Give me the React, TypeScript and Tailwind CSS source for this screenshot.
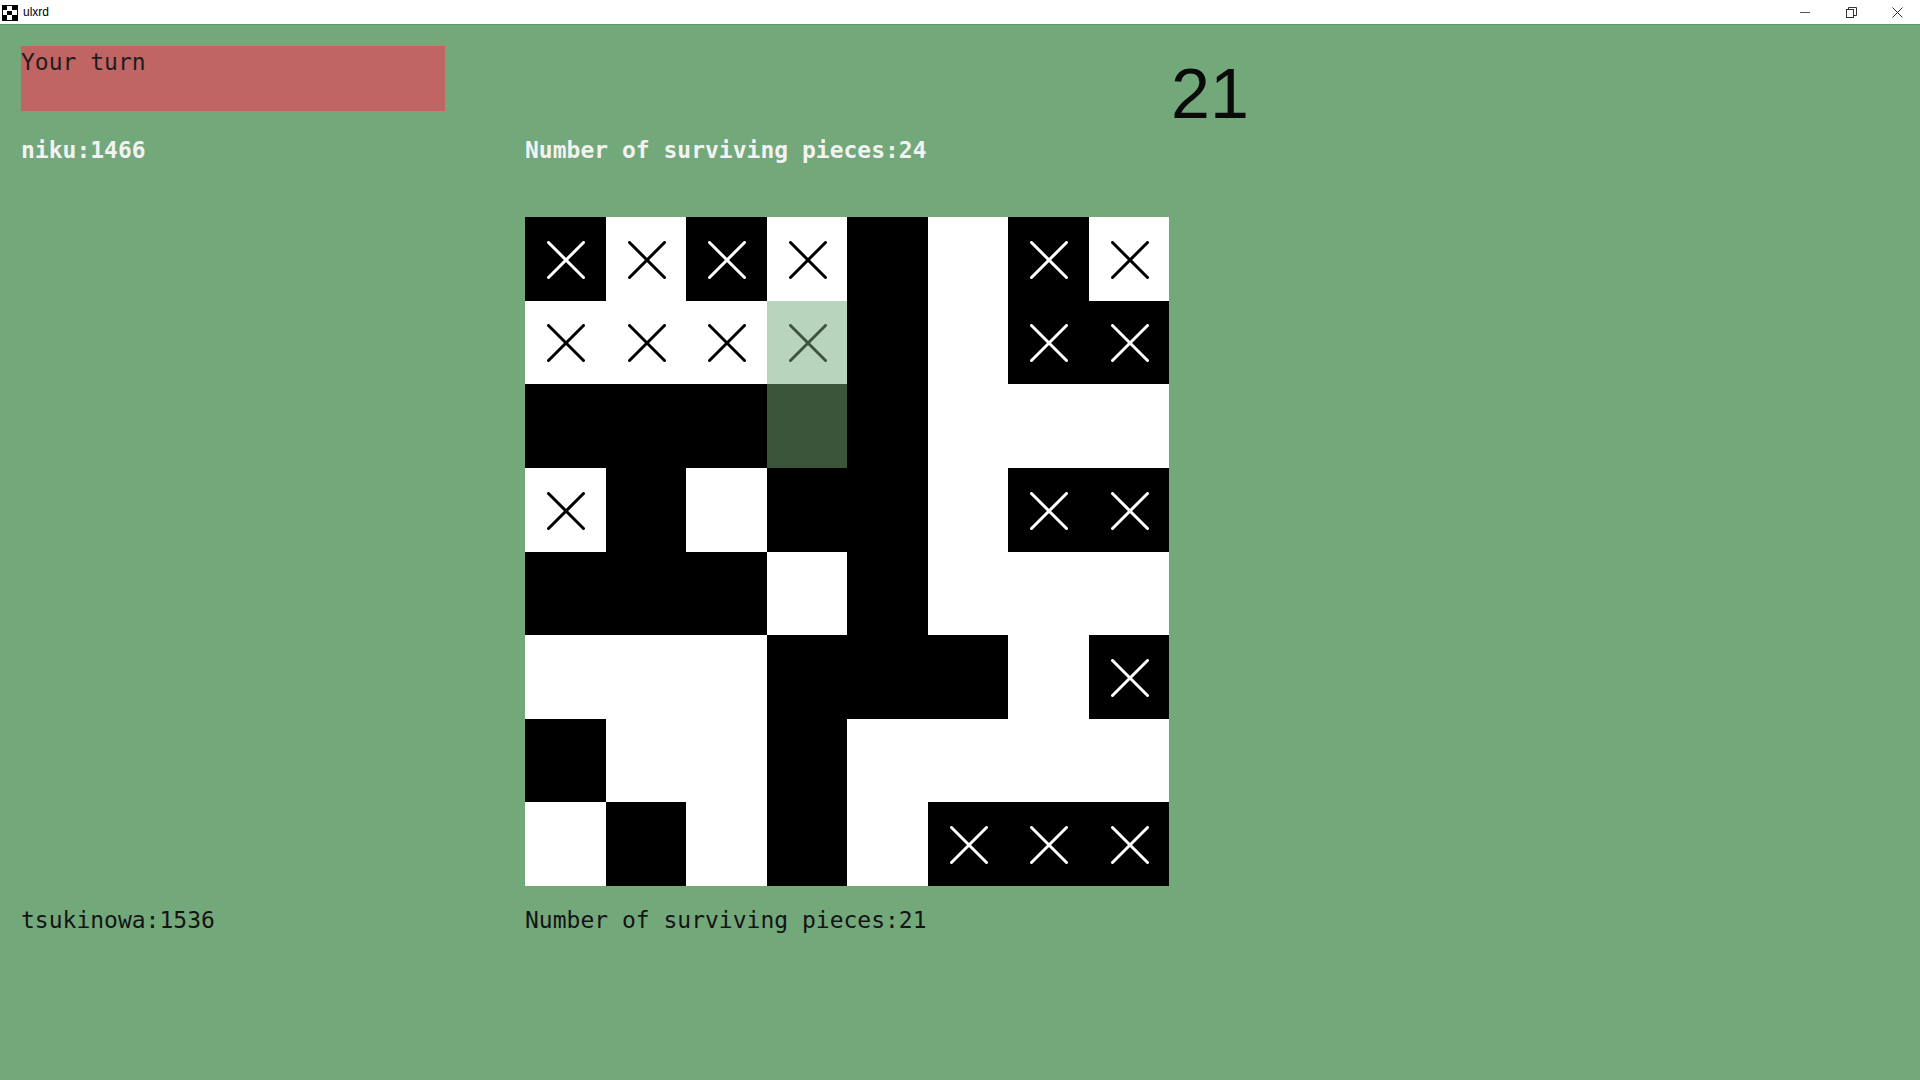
import React from 'react';

const BOARD = [
  'BWBWbwBW',
  'WWWLbwBB',
  'bbbDbwww',
  'WbwbbwBB',
  'bbbwbwww',
  'wwwbbbwB',
  'bwwbwwww',
  'wbwbwBBB',
];

const CELL_BG: Record<string, string> = {
  b: 'bg-black',
  B: 'bg-black',
  w: 'bg-white',
  W: 'bg-white',
  L: 'bg-[#b8d4bc]',
  D: 'bg-[#3b553b]',
};

const CROSS_COLOR: Record<string, string> = {
  B: '#ffffff',
  W: '#000000',
  L: '#3b553b',
};

const Cross = ({ color }: { color: string }) => (
  <svg width="38" height="38" viewBox="0 0 38 38" className="mt-[2px] ml-[2px]">
    <line x1="1.5" y1="1.5" x2="36.5" y2="36.5" stroke={color} strokeWidth="3" strokeLinecap="round" />
    <line x1="36.5" y1="1.5" x2="1.5" y2="36.5" stroke={color} strokeWidth="3" strokeLinecap="round" />
  </svg>
);

const AppIcon = () => (
  <svg width="16" height="16" viewBox="0 0 16 16">
    <rect x="0" y="0" width="16" height="16" fill="#000" />
    <rect x="5" y="1" width="5" height="5" fill="#fff" />
    <rect x="1" y="5" width="4" height="5" fill="#fff" />
    <rect x="10" y="5" width="5" height="5" fill="#fff" />
    <rect x="5" y="10" width="5" height="5" fill="#fff" />
  </svg>
);

const TitleBar = () => (
  <div className="h-[24px] bg-white flex items-center relative">
    <div className="ml-[2px] mt-[1px]">
      <AppIcon />
    </div>
    <span className="ml-[5px] text-[12px] text-black" style={{ fontFamily: '"Liberation Sans", Arial, sans-serif' }}>
      ulxrd
    </span>
    <div className="ml-auto flex items-center h-full">
      <div className="w-[46px] h-full flex items-center justify-center">
        <svg width="10" height="10" viewBox="0 0 10 10">
          <line x1="0" y1="5.5" x2="10" y2="5.5" stroke="#555" strokeWidth="1" />
        </svg>
      </div>
      <div className="w-[46px] h-full flex items-center justify-center">
        <svg width="11" height="11" viewBox="0 0 11 11">
          <rect x="0.5" y="2.5" width="7" height="8" fill="none" stroke="#333" strokeWidth="1" />
          <path d="M2.5 2.5 V0.5 H10.5 V8.5 H7.5" fill="none" stroke="#333" strokeWidth="1" />
        </svg>
      </div>
      <div className="w-[46px] h-full flex items-center justify-center">
        <svg width="11" height="11" viewBox="0 0 11 11">
          <line x1="0.5" y1="0.5" x2="10.5" y2="10.5" stroke="#333" strokeWidth="1" />
          <line x1="10.5" y1="0.5" x2="0.5" y2="10.5" stroke="#333" strokeWidth="1" />
        </svg>
      </div>
    </div>
  </div>
);

const mono = { fontFamily: '"DejaVu Sans Mono", "Liberation Mono", monospace' };

export default function App() {
  return (
    <div className="w-[1920px] h-[1080px] flex flex-col overflow-hidden">
      <TitleBar />
      <div className="flex-1 bg-[#73a87b] border-t border-[#5f9866] pl-[21px] pt-[21px]" style={mono}>
        {/* top row: turn banner + move counter */}
        <div className="flex items-start h-[65px]">
          <div className="w-[504px]">
            <div className="w-[424px] h-[65px] bg-[#c06464] pt-[5px] text-[23px] leading-[23px] text-[#1e1e1e]">
              Your turn
            </div>
          </div>
          <div className="w-[644px]" />
          <div
            className="ml-[2px] mt-[13px] text-[70px] leading-[70px] text-[#0a0a0a]"
            style={{ fontFamily: '"Liberation Sans", Arial, sans-serif' }}
          >
            21
          </div>
        </div>

        {/* opponent info */}
        <div className="flex mt-[28px] text-[23px] leading-[23px] font-bold text-[#f2f2f2]">
          <div className="w-[504px]">niku:1466</div>
          <div>Number of surviving pieces:24</div>
        </div>

        {/* board */}
        <div className="flex mt-[55px]">
          <div className="w-[504px]" />
          <div className="w-[644px] h-[669px] grid grid-cols-8 grid-rows-8">
            {BOARD.map((row, r) =>
              row.split('').map((c, i) => (
                <div key={`${r}-${i}`} className={`${CELL_BG[c]} flex items-center justify-center`}>
                  {CROSS_COLOR[c] && <Cross color={CROSS_COLOR[c]} />}
                </div>
              ))
            )}
          </div>
        </div>

        {/* player info */}
        <div className="flex mt-[23px] text-[23px] leading-[23px] text-[#141414]">
          <div className="w-[504px]">tsukinowa:1536</div>
          <div>Number of surviving pieces:21</div>
        </div>
      </div>
    </div>
  );
}
